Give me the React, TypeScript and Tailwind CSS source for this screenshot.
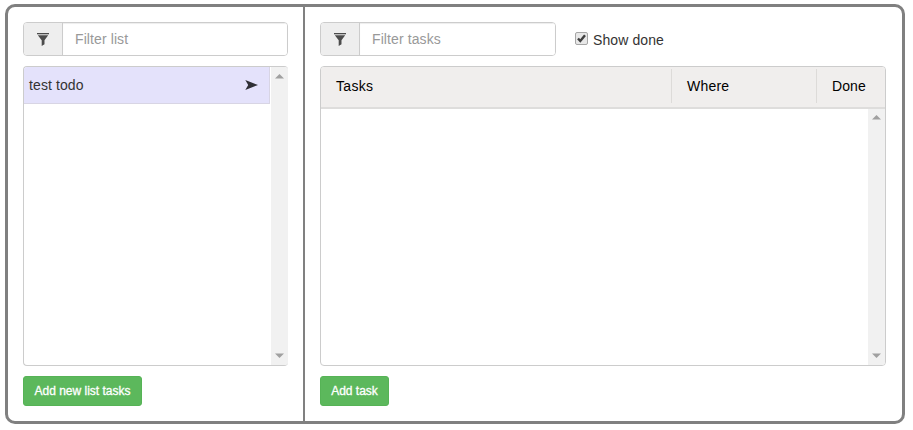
import React from 'react';

function FunnelIcon() {
  return (
    <svg width="12" height="13" viewBox="0 0 12 13" fill="#4c4c4c" aria-hidden="true">
      <rect x="0" y="0" width="12" height="1.3" />
      <path d="M0.8 2.2H11.2L7.5 7.3V11.2L4.7 13V7.3Z" />
    </svg>
  );
}

function FilterInput({ placeholder, className }: { placeholder: string; className: string }) {
  return (
    <div className={`flex h-[34px] overflow-hidden rounded border border-[#cccccc] ${className}`}>
      <span className="flex w-[39px] shrink-0 items-center justify-center border-r border-[#cccccc] bg-[#eeeeee]">
        <FunnelIcon />
      </span>
      <input
        type="text"
        placeholder={placeholder}
        className="min-w-0 flex-1 bg-white px-3 text-[14px] leading-5 tracking-[0.1px] text-[#555555] shadow-[inset_0_1px_1px_rgba(0,0,0,0.075)] outline-none placeholder:text-[#999999]"
      />
    </div>
  );
}

function ScrollBar({ className }: { className: string }) {
  return (
    <div className={`flex w-[17px] shrink-0 flex-col items-center justify-between bg-[#f1f1f1] pb-[7px] ${className}`}>
      <svg width="9" height="5" viewBox="0 0 9 5" fill="#a0a0a0" aria-hidden="true">
        <path d="M0 4.5L4.5 0L9 4.5Z" />
      </svg>
      <svg width="9" height="5" viewBox="0 0 9 5" fill="#a0a0a0" aria-hidden="true">
        <path d="M0 0.5H9L4.5 5Z" />
      </svg>
    </div>
  );
}

function GreenButton({ label, className }: { label: string; className: string }) {
  return (
    <button
      className={`mt-[10px] h-[30px] whitespace-nowrap rounded-[3px] border border-[#56b356] bg-[#5cb85c] text-center text-[12px] leading-[18px] text-white [-webkit-text-stroke:0.3px_white] ${className}`}
    >
      {label}
    </button>
  );
}

export default function App() {
  return (
    <div
      className="h-[430px] w-[913px] bg-white pl-[5px] pt-1 text-[14px] leading-5 tracking-[0.1px] text-[#333333]"
      style={{ fontFamily: '"Liberation Sans", Arial, sans-serif' }}
    >
      <div className="flex h-[420px] w-[900px] rounded-[10px] border-[3px] border-[#808080]">
        <section className="w-[297px] shrink-0 border-r-2 border-[#808080] pl-[15px] pt-[15px]">
          <FilterInput placeholder="Filter list" className="w-[265px]" />
          <div className="mt-[10px] flex h-[300px] w-[265px] overflow-hidden rounded border border-r-0 border-[#cccccc]">
            <div className="min-w-0 flex-1">
              <div className="mr-px flex h-[37px] items-center justify-between border-b border-r border-[#d8d5e4] bg-[#e4e2fb] pl-[5px] pr-[11px]">
                <span>test todo</span>
                <svg width="13" height="10" viewBox="0 0 13 10" fill="#2f2f35" aria-hidden="true">
                  <path d="M0.3 0L13 5L0.3 10L3.2 5Z" />
                </svg>
              </div>
            </div>
            <ScrollBar className="pt-[7px]" />
          </div>
          <GreenButton label="Add new list tasks" className="w-[119px] tracking-normal" />
        </section>

        <section className="flex-1 pl-[15px] pt-[15px]">
          <div className="flex">
            <FilterInput placeholder="Filter tasks" className="w-[236px]" />
            <label className="ml-[19px] flex h-[34px] items-center">
              <svg width="13" height="13" viewBox="0 0 13 13" className="mb-px mr-[5px]" aria-hidden="true">
                <rect x="0.5" y="0.5" width="12" height="12" rx="1.5" fill="#e8e8e8" stroke="#a6a6a6" />
                <path d="M3 6.5L5.3 9L10 3.2" fill="none" stroke="#404040" strokeWidth="2.4" />
              </svg>
              <span className="mt-0.5">Show done</span>
            </label>
          </div>
          <div className="mt-[10px] flex h-[300px] w-[566px] flex-col overflow-hidden rounded border border-[#cccccc]">
            <div className="flex h-[42px] shrink-0 border-b-2 border-[#dedddc] bg-[#f0eeed] pt-0.5 text-black">
              <div className="h-[34px] w-[351px] border-r border-[#dddbd9] pl-[15px] leading-[34px] tracking-[0.3px]">Tasks</div>
              <div className="h-[34px] w-[145px] border-r border-[#dddbd9] pl-[15px] leading-[34px] tracking-[0.2px]">Where</div>
              <div className="h-[34px] pl-[15px] leading-[34px]">Done</div>
            </div>
            <div className="flex flex-1">
              <div className="flex-1" />
              <ScrollBar className="pt-[6px]" />
            </div>
          </div>
          <GreenButton label="Add task" className="w-[69px] tracking-normal" />
        </section>
      </div>
    </div>
  );
}
